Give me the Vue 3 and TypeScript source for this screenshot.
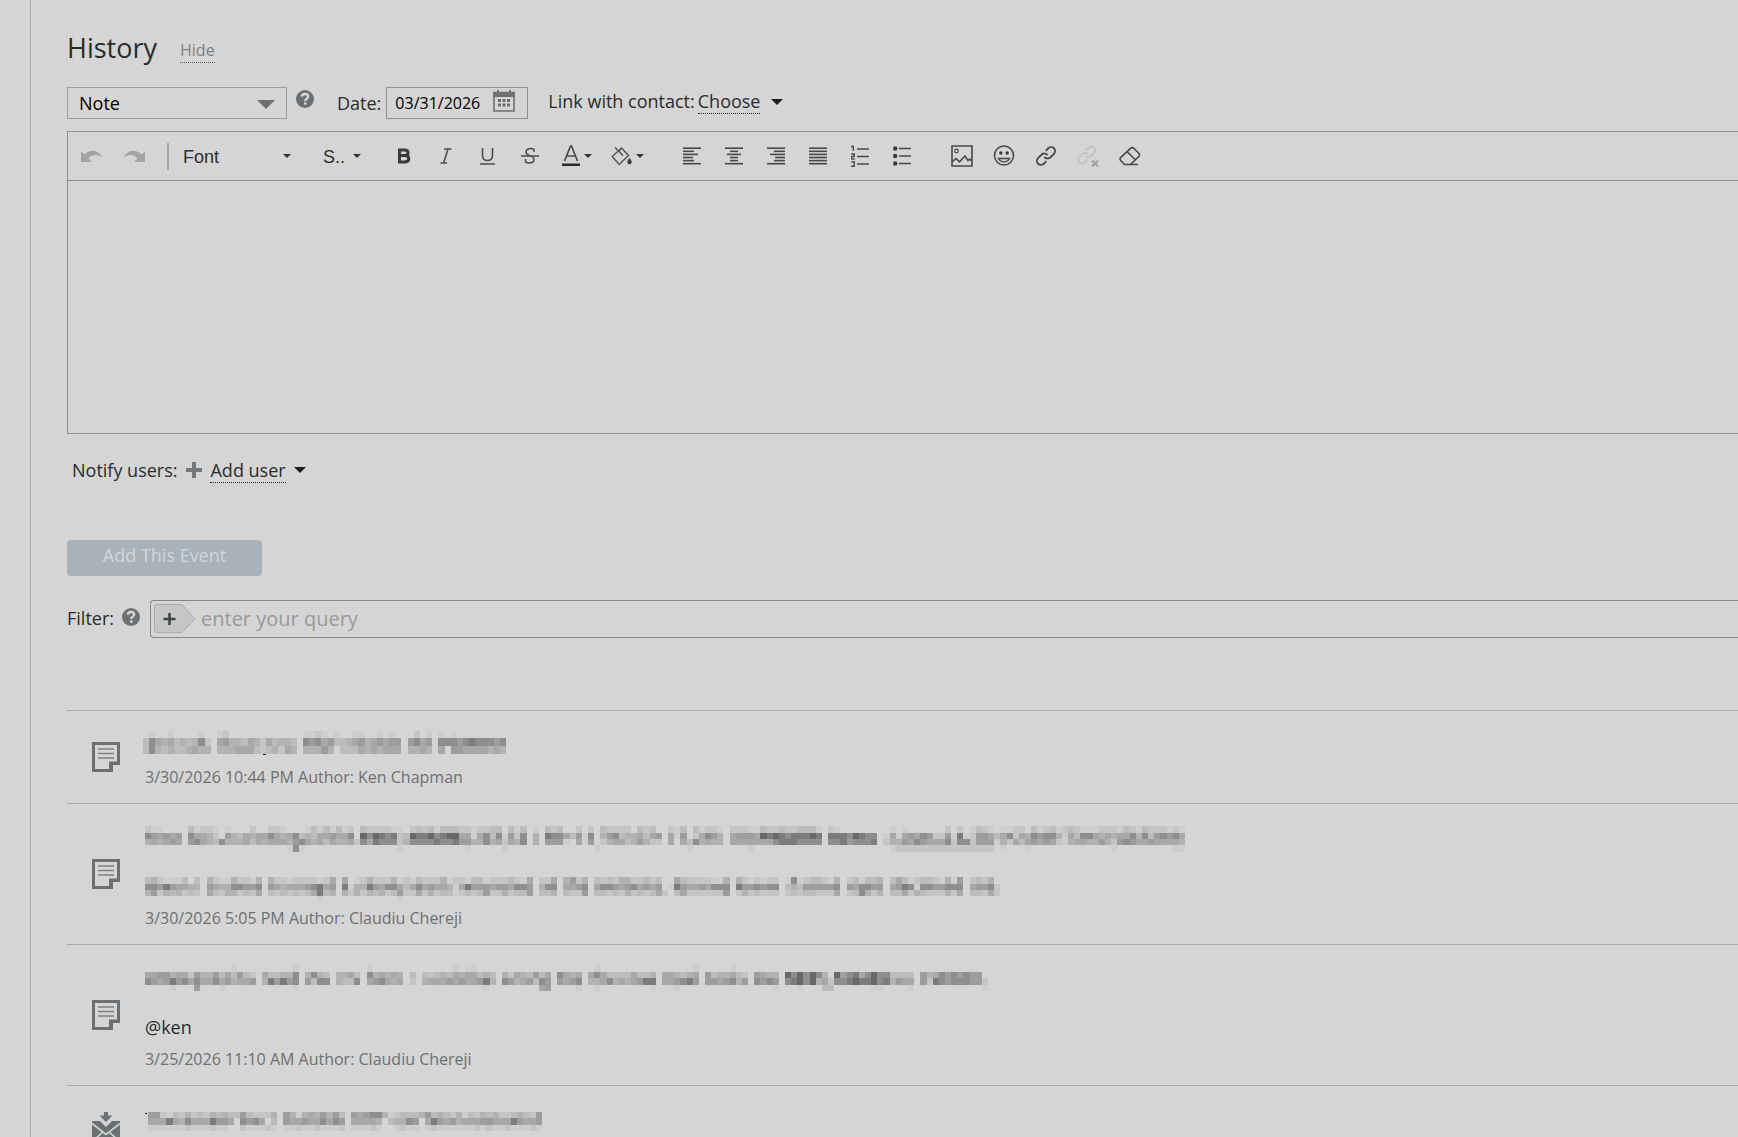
<script setup lang="ts">
import { ref } from 'vue'

interface Mosaic {
  kind: 'mosaic'
  left: number
  tops: number[]
  rows: string[]
  speck?: { x: number; y: number; w: number; h: number }
}
interface Plain {
  kind: 'text'
  text: string
}
interface Entry {
  icon: 'note' | 'mail'
  lines: (Mosaic | Plain)[]
  meta: string
}

const eventType = ref('Note')
const date = ref('03/31/2026')
const query = ref('')

// Obscured text is stored as rows of shade levels: 1 is faint, 9 is darkest,
// a dot is an empty cell. Spaces only group the digits.
const shades = ['', '#cecece', '#c5c5c5', '#bcbcbc', '#b2b2b2', '#a8a8a8', '#9d9d9d', '#8e8e8e', '#7c7c7c', '#686868']
const edge = (i: number): number => Math.round((i * 80) / 13)

function cells(m: Mosaic) {
  return m.rows.flatMap((row, r) =>
    [...row.replace(/ /g, '')].flatMap((level, c) =>
      level === '.'
        ? []
        : [{ x: m.left + edge(c), y: m.tops[r], w: edge(c + 1) - edge(c), h: m.tops[r + 1] - m.tops[r], fill: shades[Number(level)] }],
    ),
  )
}

const entries: Entry[] = [
  {
    icon: 'note',
    lines: [
      {
        kind: 'mosaic',
        left: -2,
        tops: [0, 7, 15, 23],
        rows: [
          '.1..1....1 ..12...... ......1121 .1..11..1. 1...2.1.1. 1........',
          '3754534347 2.56443542 53443.7675 6334564565 66.6756.77 767877767',
          '3743433454 4.44455532 34254.4446 4.33354545 55.4454.5. 665555454',
        ],
        speck: { x: 118, y: 23, w: 3, h: 1 },
      },
    ],
    meta: '3/30/2026 10:44 PM Author: Ken Chapman',
  },
  {
    icon: 'note',
    lines: [
      {
        kind: 'mosaic',
        left: 0,
        tops: [2, 9, 15, 21, 28],
        rows: [
          '211....312 21.1...2.. 221...1313 1312.32222 11.23231 3332212233 .313.1.323 ..2.2.3222 2.323..213 .31221.222 1132232233 31.21..... ...1.1.... ..2.2.1321 .1122.3123 1232111222 13213222121',
          '765656.755 42.6435455 7545734355 6557.97987 82398897 8995515737 1627.4.877 53617.4673 445356.516 .25764.566 6598987888 98.8887987 7.15156576 2261812665 3572547677 4153775454 55747367675',
          '454565.675 4374445354 5554675453 5445275877 72477778 7786644745 2547.4.666 1.516.2455 346422.5.5 374544.555 5555788877 77.7786777 8.24465765 5572772666 1425356565 2145544642 67655655554',
          '.......... .......... ...171.... .......... .1...... ....1..... 1......... .....1.... .......... 1......... 1......... .......... ...1222222 2222222222 .1...1.... .........1 .........11',
        ],
      },
      {
        kind: 'mosaic',
        left: 0,
        tops: [5, 12, 18, 24, 30],
        rows: [
          '3421113.3. 421142214. 4221222212 5.5.124222 41213222 4122133122 23215.225. 4624.32324 422323..53 2222114.42 12122.1712 33214.2313 34.3531233 21416.2324',
          '776865544. 654477667. 6545556785 6.81448657 75357565 5415866656 65776.477. 5567.57765 675656.186 5565777.86 67677.3436 66667.6577 66.5687177 66777.5667 2',
          '462434232. 532442325. 3232323583 4.42424342 36225242 3312323622 42336.334. 3226.33232 4232352.35 2222226.24 23222.2323 32225.2374 24.3352432 22425.3325 2',
          '.......... .......... ........1. .......... .1......',
        ],
      },
    ],
    meta: '3/30/2026 5:05 PM Author: Claudiu Chereji',
  },
  {
    icon: 'note',
    lines: [
      {
        kind: 'mosaic',
        left: 0,
        tops: [0, 7, 13, 20, 26],
        rows: [
          '.......... ....1..... ....1..... ......1... ........ ..1.11.... .......... .....1.... .......... .1.....1..',
          '5566455264 46353632.5 33447.4743 .4453.7454 54.3.323 435455343. 42543635.7 545.575333 35334.5543 45.6344532 .6544.9797 974.967857 9773333.64 57676766',
          '7656867575 57564556.4 86867.6377 .4337.5675 45.2.455 565655684. 76456376.6 567.445745 45688.5567 86.6656746 .7676.7897 9452778988 9784655.62 876777662',
          '....1...6. ..1....... ....1..... .......... ........ .......1.. ......56.. ..1..1.... ....1...1. .......... ....1...1. ..33...... 11....1... ........1',
        ],
      },
      { kind: 'text', text: '@ken' },
    ],
    meta: '3/25/2026 11:10 AM Author: Claudiu Chereji',
  },
  {
    icon: 'mail',
    lines: [
      {
        kind: 'mosaic',
        left: 3,
        tops: [6, 12, 19, 25],
        rows: [
          '6621324232 4343363222 4.64145464 63.6567741 2333463432 4132434223 4326',
          '5558547555 8665.7675. 3.65565575 76.55554.3 4476.58656 4555665558 6556',
          '1111112111 211..21112 1.11211211 12.11121.. 1211.12111 1112121121 1121',
        ],
        speck: { x: 0, y: 7, w: 2, h: 1 },
      },
    ],
    meta: '',
  },
]

// Each bar is [start, length].
const alignBars: Record<string, [number, number][]> = {
  left: [[0, 18], [0, 11], [0, 15], [0, 10], [0, 11], [0, 18]],
  center: [[0, 18], [5, 8], [2, 14], [5, 8], [5, 8], [0, 18]],
  right: [[0, 18], [7, 11], [3, 15], [8, 10], [7, 11], [0, 18]],
  justify: [[0, 18], [0, 18], [0, 18], [0, 18], [0, 18], [0, 18]],
}
</script>

<template>
  <main class="page">
    <section class="panel">
      <header class="heading">
        <h1>History</h1>
        <a class="hide" href="#">Hide</a>
      </header>

      <div class="controls">
        <div class="type">
          <select v-model="eventType" aria-label="Event type">
            <option>Note</option>
          </select>
          <svg class="type-arrow" width="18" height="9" viewBox="0 0 18 9"><path d="M0 0h18L9 9z" fill="#6c7072" /></svg>
        </div>
        <svg class="help help-top" width="18" height="18" viewBox="0 0 18 18">
          <circle cx="9" cy="9" r="9" fill="#6c7072" />
          <path d="M5.8 6.6C6 4.8 7.3 4 9 4c1.9 0 3.2 1 3.2 2.6C12.2 8.7 9.2 8.6 9.2 11" fill="none" stroke="#d5d5d5" stroke-width="2.4" />
          <rect x="8" y="12.3" width="2.6" height="2.4" fill="#d5d5d5" />
        </svg>
        <label class="date-label" for="event-date">Date:</label>
        <div class="date">
          <input id="event-date" v-model="date" type="text" />
          <svg width="22" height="22" viewBox="0 0 22 22">
            <path d="M1 2.5h20V21H1z" fill="none" stroke="#6c7072" stroke-width="1.6" />
            <path d="M0 2h22v5H0zM4 0h2v3H4zM16 0h2v3h-2z" fill="#6c7072" />
            <path d="M5 9h3v3H5zM9.500 9h3v3h-3zM14 9h3v3h-3zM5 13.500h3v3H5zM9.500 13.500h3v3h-3zM14 13.500h3v3h-3z" fill="#6c7072" />
          </svg>
        </div>
        <div class="contact">
          <span>Link with contact:</span>
          <button type="button" class="pick"><span class="dotted">Choose</span><svg width="12" height="6" viewBox="0 0 12 6"><path d="M0 0h12L6 6z" fill="#1c1e1e" /></svg></button>
        </div>
      </div>

      <div class="editor">
        <div class="toolbar">
          <button type="button" class="tool" aria-label="Undo">
            <svg width="22" height="13" viewBox="0 0 22 13"><path d="M0 1v11h11L7.500 8.500C11 4.500 16 3.500 21 7.500 18 0 9-1.500 3.500 4.600z" fill="#a4a4a4" /></svg>
          </button>
          <button type="button" class="tool" aria-label="Redo">
            <svg width="22" height="13" viewBox="0 0 22 13"><path d="M22 1v11H11l3.500-3.500C11 4.500 6 3.500 1 7.500 4 0 13-1.500 18.500 4.600z" fill="#a4a4a4" /></svg>
          </button>
          <span class="rule"></span>
          <div class="combo font">
            <select aria-label="Font"><option>Font</option></select>
            <svg class="caret" width="8" height="4" viewBox="0 0 8 4"><path d="M0 0h8L4 4z" fill="#333" /></svg>
          </div>
          <div class="combo size">
            <select aria-label="Size"><option>S..</option></select>
            <svg class="caret" width="8" height="4" viewBox="0 0 8 4"><path d="M0 0h8L4 4z" fill="#333" /></svg>
          </div>
          <button type="button" class="tool" aria-label="Bold">
            <svg width="18" height="18" viewBox="0 0 18 18"><path d="M4.500 3h5c2.400 0 3.600 1 3.600 2.800 0 1.700-1.200 2.700-3.400 2.700H4.500h5.400c2.600 0 3.900 1.200 3.900 3.200 0 2.200-1.500 3.300-4.200 3.300H4.500z" fill="none" stroke="#3a3a3a" stroke-width="3" /></svg>
          </button>
          <button type="button" class="tool" aria-label="Italic">
            <svg width="18" height="18" viewBox="0 0 18 18"><path d="M7 2h7.500M3.500 16H10M11 2L6.700 16" fill="none" stroke="#4c4c4c" stroke-width="1.600" /></svg>
          </button>
          <button type="button" class="tool" aria-label="Underline">
            <svg width="18" height="18" viewBox="0 0 18 18"><path d="M3.500 1v7.500c0 3.500 2 5 5 5s5-1.500 5-5V1M1 17h15" fill="none" stroke="#4c4c4c" stroke-width="1.600" /></svg>
          </button>
          <button type="button" class="tool" aria-label="Strikethrough">
            <svg width="18" height="18" viewBox="0 0 18 18"><path d="M13 5V2.500C11 1.300 5 .8 5 5c0 4.500 8 2.800 8 7.500 0 4.300-6 3.800-8.500 2.500v-3M0 9h18" fill="none" stroke="#4c4c4c" stroke-width="1.500" /></svg>
          </button>
          <button type="button" class="tool wide" aria-label="Text colour">
            <svg width="18" height="22" viewBox="0 0 18 22"><path d="M2.500 16L8.500 1h1l6 15M5 11h8" fill="none" stroke="#4c4c4c" stroke-width="1.700" /><path d="M0 18.500h18V21H0z" fill="#2b2b2b" /></svg>
            <svg width="8" height="4" viewBox="0 0 8 4"><path d="M0 0h8L4 4z" fill="#333" /></svg>
          </button>
          <button type="button" class="tool wide" aria-label="Fill colour">
            <svg width="21" height="22" viewBox="0 0 21 22"><path d="M10.500 3L1.200 11.500l7 8 9.300-9zM4 2.500l8 8M8 6.500L10.500 3" fill="none" stroke="#555" stroke-width="1.500" /><path d="M18.500 13c1.500 1.800 2.200 3 2.200 4a2.200 2.200 0 0 1-4.400 0c0-1 .7-2.200 2.200-4z" fill="#3a3a3a" /></svg>
            <svg width="8" height="4" viewBox="0 0 8 4"><path d="M0 0h8L4 4z" fill="#333" /></svg>
          </button>
          <span class="space"></span>
          <button v-for="(bars, name) in alignBars" :key="name" type="button" class="tool" :aria-label="`Align ${name}`">
            <svg width="18" height="18" viewBox="0 0 18 18">
              <rect v-for="(bar, i) in bars" :key="i" :x="bar[0]" :y="0.4 + i * 3.1" :width="bar[1]" height="1.6" fill="#484848" />
            </svg>
          </button>
          <button type="button" class="tool" aria-label="Numbered list">
            <svg width="18" height="22" viewBox="0 0 18 22"><path d="M6 4h12M6 11.500h12M6 19h12" stroke="#484848" stroke-width="1.600" /><path d="M0 1.500h2.300V6M.3 9h3v2.500h-3V14h3.500M.3 17h3v4.300H0" fill="none" stroke="#484848" stroke-width="1.400" /></svg>
          </button>
          <button type="button" class="tool" aria-label="Bulleted list">
            <svg width="18" height="20" viewBox="0 0 18 20"><path d="M6 2.500h12M6 10h12M6 17.500h12" stroke="#484848" stroke-width="1.600" /><circle cx="2.200" cy="2.500" r="2.200" fill="#3a3a3a" /><circle cx="2.200" cy="10" r="2.200" fill="#3a3a3a" /><circle cx="2.200" cy="17.500" r="2.200" fill="#3a3a3a" /></svg>
          </button>
          <span class="space"></span>
          <button type="button" class="tool" aria-label="Image">
            <svg width="22" height="22" viewBox="0 0 22 22"><path d="M1 1h20v20H1zM1 17l4-3.500 3.500 3.300L14 11l3 4.500 1.800-1.500L21 16.500" fill="none" stroke="#484848" stroke-width="1.600" /><circle cx="5.500" cy="6" r="1.800" fill="none" stroke="#484848" stroke-width="1.200" /></svg>
          </button>
          <button type="button" class="tool" aria-label="Emoji">
            <svg width="22" height="22" viewBox="0 0 22 22"><circle cx="11" cy="10.500" r="9.500" fill="none" stroke="#484848" stroke-width="1.600" /><path d="M5.500 13.500c2.500 4.500 8.500 4.500 11 0z" fill="none" stroke="#484848" stroke-width="1.400" /><circle cx="7.800" cy="8" r="1.700" fill="#3a3a3a" /><circle cx="14.200" cy="8" r="1.700" fill="#3a3a3a" /></svg>
          </button>
          <button type="button" class="tool" aria-label="Link">
            <svg width="20" height="20" viewBox="0 0 24 24"><path d="M10 13a5 5 0 0 0 7.500.5l4-4a4.700 4.700 0 0 0-6.800-6.800l-3 3M14 11a5 5 0 0 0-7.500-.5l-4 4a4.700 4.700 0 0 0 6.800 6.800l3-3" fill="none" stroke="#484848" stroke-width="2.200" /></svg>
          </button>
          <button type="button" class="tool" aria-label="Remove link">
            <svg width="22" height="22" viewBox="0 0 22 22"><path d="M8.500 11a3.800 3.800 0 0 0 5.500 0l3.200-3.200a3.600 3.600 0 0 0-5.200-5.200L9.500 5M11 9a3.800 3.800 0 0 0-5.500 0l-3.200 3.200a3.600 3.600 0 0 0 5.200 5.200L10 15" fill="none" stroke="#bdbdbd" stroke-width="1.600" /><path d="M15 15.500l6 6M21 15.500l-6 6" stroke="#9f9f9f" stroke-width="2" /></svg>
          </button>
          <button type="button" class="tool" aria-label="Clear formatting">
            <svg width="22" height="20" viewBox="0 0 22 20"><path d="M5.500 18.500L1.700 14.500c-.8-1-.7-2.300.2-3.200L11.500 2.300c1-.9 2.300-.9 3.300 0l5 5c.9 1 .9 2.200 0 3.200L11.500 18.500zM8 5.500l8.500 8.500M5.500 18.500H19" fill="none" stroke="#484848" stroke-width="1.600" /></svg>
          </button>
        </div>
        <textarea class="body" aria-label="Event text"></textarea>
      </div>

      <div class="notify">
        <span>Notify users:</span>
        <svg class="plus" width="16" height="16" viewBox="0 0 16 16"><path d="M6 0h4v6h6v4h-6v6H6v-6H0V6h6z" fill="#74787a" /></svg>
        <button type="button" class="pick add"><span class="dotted">Add user</span><svg width="12" height="6" viewBox="0 0 12 6"><path d="M0 0h12L6 6z" fill="#1c1e1e" /></svg></button>
      </div>

      <button type="button" class="submit">Add This Event</button>

      <div class="filter">
        <label for="filter-query">Filter:</label>
        <svg class="help" width="18" height="18" viewBox="0 0 18 18">
          <circle cx="9" cy="9" r="9" fill="#6c7072" />
          <path d="M5.8 6.6C6 4.8 7.3 4 9 4c1.9 0 3.2 1 3.2 2.6C12.2 8.7 9.2 8.6 9.2 11" fill="none" stroke="#d5d5d5" stroke-width="2.4" />
          <rect x="8" y="12.3" width="2.6" height="2.4" fill="#d5d5d5" />
        </svg>
        <div class="query">
          <button type="button" class="tag" aria-label="Add condition">
            <svg width="42" height="30" viewBox="0 0 42 30"><path d="M3 .5h25L41 15 28 28.500H3a2.500 2.500 0 0 1-2.500-2.500V3A2.500 2.500 0 0 1 3 .5z" fill="#c6c6c6" stroke="#acacac" /><path d="M14.200 9h2.600v4.700h4.700v2.600h-4.700V21h-2.600v-4.700H9.500v-2.600h4.700z" fill="#3f4648" /></svg>
          </button>
          <input id="filter-query" v-model="query" type="text" placeholder="enter your query" />
        </div>
      </div>

      <ul class="entries">
        <li v-for="(entry, n) in entries" :key="n" class="entry">
          <div class="mark">
            <svg v-if="entry.icon === 'note'" width="28" height="30" viewBox="0 0 28 30">
              <path d="M1.500 1.500h25v20h-7v7h-18zM18.500 28.500v-7.500h8" fill="none" stroke="#6c7072" stroke-width="3" />
              <path d="M6 7h16M6 11.500h16M6 16h16" stroke="#7c8082" stroke-width="1.500" />
            </svg>
            <svg v-else width="28" height="40" viewBox="0 0 28 40">
              <path d="M12 0h4v3.500h4.500L14 10 7.500 3.500H12z" fill="#6c7072" />
              <path d="M0 9h8l6 6 6-6h8v25H0z" fill="#6c7072" />
              <path d="M0 11.500l14 11 14-11M3 27l8-7M25 27l-8-7" fill="none" stroke="#d5d5d5" stroke-width="1.600" />
            </svg>
          </div>
          <div class="content">
            <template v-for="(line, l) in entry.lines" :key="l">
              <p v-if="line.kind === 'text'">{{ line.text }}</p>
              <svg v-else class="mosaic" height="32" shape-rendering="crispEdges" aria-hidden="true">
                <rect v-for="(cell, c) in cells(line)" :key="c" :x="cell.x" :y="cell.y" :width="cell.w" :height="cell.h" :fill="cell.fill" />
                <rect v-if="line.speck" :x="line.speck.x" :y="line.speck.y" :width="line.speck.w" :height="line.speck.h" fill="#222" />
              </svg>
            </template>
            <p class="meta">{{ entry.meta }}</p>
          </div>
        </li>
      </ul>
    </section>
  </main>
</template>

<style>
body {
  background: #d5d5d5;
}
</style>

<style scoped>
.page {
  height: 100vh;
  overflow: hidden;
  padding-left: 30px;
  box-sizing: border-box;
  background: #d5d5d5;
  color: #2b2b2b;
  font-family: 'Open Sans', 'Noto Sans', sans-serif;
  font-size: 18px;
  line-height: 24px;
}
.page * {
  box-sizing: border-box;
}
button,
input,
select,
textarea {
  margin: 0;
  padding: 0;
  border: 0;
  border-radius: 0;
  background: none;
  color: inherit;
  font: inherit;
  outline: 0;
}
select {
  appearance: none;
}
svg {
  display: block;
  flex: none;
}
.panel {
  min-height: 100%;
  border-left: 1px solid #a9a9a9;
  padding: 30px 0 0 36px;
}
.heading {
  display: flex;
  align-items: flex-start;
  gap: 23px;
  height: 57px;
}
h1 {
  margin: 0;
  font-size: 27px;
  font-weight: 400;
  line-height: 36px;
}
.hide {
  margin-top: 9px;
  color: #7c8082;
  font-size: 16px;
  line-height: 23px;
  text-decoration: none;
  border-bottom: 1px dotted #5c5c5c;
}
.controls {
  display: flex;
  height: 44px;
}
.type {
  position: relative;
  width: 220px;
  height: 32px;
  border: 1px solid #9b9d9e;
}
.type select {
  display: block;
  width: 100%;
  height: 30px;
  padding-left: 11px;
  color: #000;
}
.type-arrow {
  position: absolute;
  right: 11px;
  top: 12px;
  pointer-events: none;
}
.help-top {
  margin: 3px 0 0 9px;
}
.date-label {
  margin: 4px 5px 0 23px;
}
.date {
  display: flex;
  width: 142px;
  height: 32px;
  border: 1px solid #8e9091;
}
.date input {
  width: 98px;
  height: 30px;
  padding-left: 8px;
  font-size: 16px;
  color: #000;
}
.date svg {
  margin: 2px 0 0 8px;
}
.contact {
  display: flex;
  gap: 3px;
  margin: 2px 0 0 20px;
}
.pick {
  display: flex;
  align-items: center;
  gap: 11px;
  height: 25px;
}
.dotted {
  border-bottom: 1px dotted #2b2b2b;
}
.editor {
  border: 1px solid #8e9091;
  border-right: 0;
}
.toolbar {
  display: flex;
  align-items: center;
  height: 49px;
  padding-left: 3px;
  border-bottom: 1px solid #8e9091;
}
.tool {
  display: flex;
  align-items: center;
  justify-content: center;
  width: 42px;
  height: 40px;
  flex: none;
}
.wide {
  width: 51px;
  gap: 4px;
}
.rule {
  width: 2px;
  height: 27px;
  margin: 0 14px 0 12px;
  background: #a3a3a3;
  flex: none;
}
.space {
  width: 18px;
  flex: none;
}
.combo {
  position: relative;
  font-family: 'Liberation Sans', Arial, sans-serif;
  flex: none;
}
.combo select {
  display: block;
  width: 100%;
  height: 32px;
  padding-top: 2px;
}
.font {
  width: 108px;
  margin-right: 32px;
}
.size {
  width: 38px;
  margin-right: 22px;
}
.caret {
  position: absolute;
  right: 0;
  top: 14px;
  pointer-events: none;
}
.body {
  display: block;
  width: 100%;
  height: 252px;
  resize: none;
}
.notify {
  display: flex;
  align-items: center;
  height: 72px;
  padding-left: 5px;
}
.plus {
  margin: 0 8px 0 9px;
}
.add {
  gap: 8px;
}
.submit {
  display: block;
  width: 195px;
  height: 36px;
  margin-top: 34px;
  padding-bottom: 6px;
  border-radius: 4px;
  background: #a8b2ba;
  color: #d3d6d8;
}
.filter {
  display: flex;
  align-items: center;
  margin-top: 24px;
}
.filter label {
  padding-bottom: 2px;
}
.filter .help {
  margin: 0 10px 4px 8px;
}
.query {
  display: flex;
  flex: 1;
  align-items: center;
  height: 38px;
  padding-left: 3px;
  border: 1px solid #868888;
  border-right: 0;
  border-radius: 4px 0 0 4px;
}
.query input {
  flex: 1;
  height: 36px;
  padding: 0 0 2px 5px;
  font-size: 20px;
}
.query input::placeholder {
  color: #999;
  opacity: 1;
}
.entries {
  margin: 72px 0 0;
  padding: 0;
  list-style: none;
}
.entry {
  display: flex;
  align-items: center;
  border-top: 1px solid #a9a9a9;
}
.mark {
  width: 78px;
  padding-left: 25px;
  flex: none;
}
.content {
  flex: 1;
  display: flex;
  flex-direction: column;
  gap: 16px;
  padding: 20px 0 8px;
}
.content p {
  margin: 0;
  height: 32px;
  line-height: 28px;
}
.mosaic {
  width: 100%;
  overflow: visible;
}
.content .meta {
  margin-top: -16px;
  font-size: 16px;
  color: #6c7072;
}
</style>
